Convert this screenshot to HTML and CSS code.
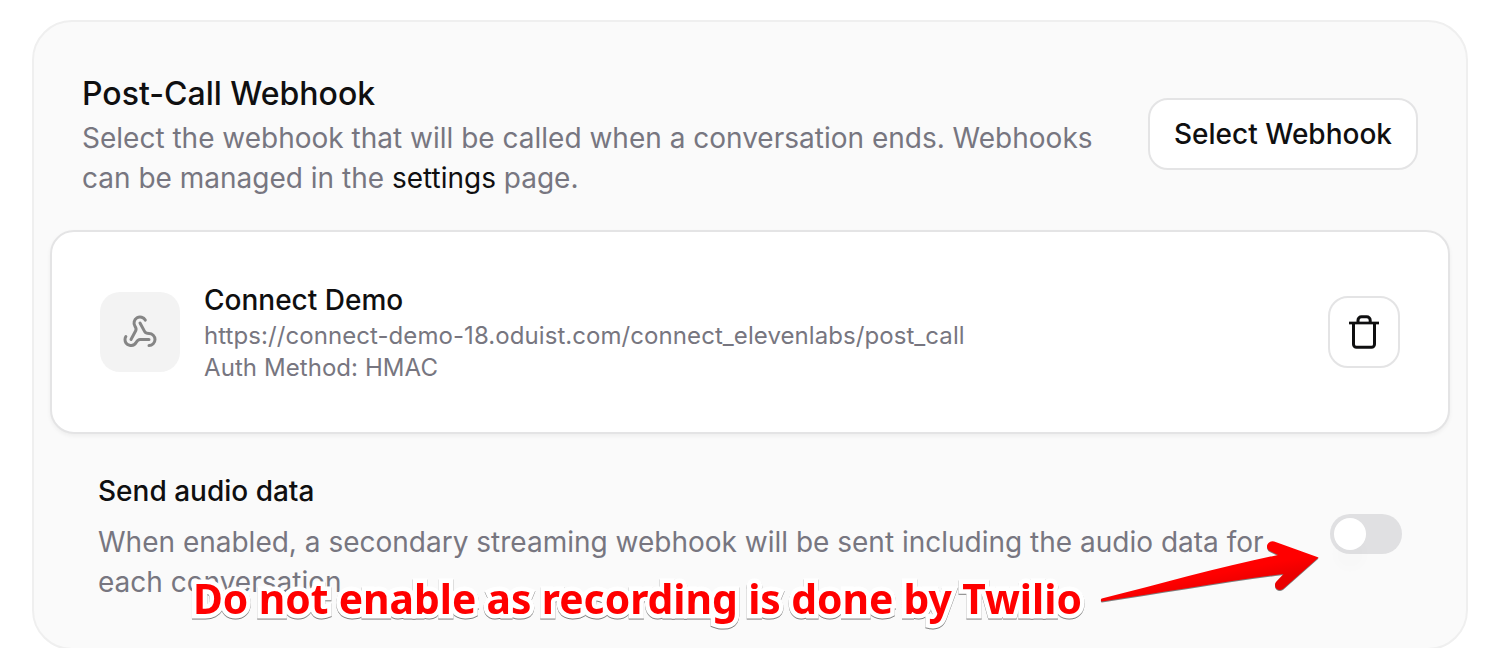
FILE: index.html
```html
<!DOCTYPE html>
<html lang="en">
<head>
  <meta charset="UTF-8" />
  <title>Post-Call Webhook</title>
  <link rel="stylesheet" href="styles.css">
</head>
<body>

  <section class="panel">
    <header class="panel-header">
      <div class="panel-intro">
        <h2>Post-Call Webhook</h2>
        <p class="description">Select the webhook that will be called when a conversation ends. Webhooks can be managed in the <a href="#">settings</a> page.</p>
      </div>
      <button class="select-btn">Select Webhook</button>
    </header>

    <div class="webhook">
      <div class="webhook-icon">
        <svg width="36" height="36" viewBox="0 0 24 24" fill="none" stroke="currentColor" stroke-width="2" stroke-linecap="round" stroke-linejoin="round">
          <path d="M18 16.98h-5.99c-1.1 0-1.95.94-2.48 1.9A4 4 0 0 1 2 17c.01-.7.2-1.4.57-2" />
          <path d="m6 17 3.13-5.78c.53-.97.1-2.18-.5-3.1a4 4 0 1 1 6.89-4.06" />
          <path d="m12 6 3.13 5.73C15.66 12.7 16.9 13 18 13a4 4 0 0 1 0 8" />
        </svg>
      </div>
      <div class="webhook-info">
        <h3>Connect Demo</h3>
        <p>https://connect-demo-18.oduist.com/connect_elevenlabs/post_call</p>
        <p>Auth Method: HMAC</p>
      </div>
      <button class="delete-btn" aria-label="Delete webhook">
        <svg width="40" height="40" viewBox="0 0 40 40" fill="none" stroke="currentColor" stroke-width="3">
          <path d="M5 11h30" stroke-width="2.7" />
          <path d="M9.5 11v21.3a3 3 0 0 0 3 3h15a3 3 0 0 0 3-3V11" />
          <path d="M14 11V8.2a3.5 3.5 0 0 1 3.5-3.5h5.2a3.5 3.5 0 0 1 3.5 3.5V11" />
        </svg>
      </button>
    </div>

    <div class="audio">
      <div class="audio-text">
        <h3>Send audio data</h3>
        <p class="description">When enabled, a secondary streaming webhook will be sent including the audio data for each conversation.</p>
      </div>
      <button class="switch" role="switch" aria-checked="false" aria-label="Send audio data"><span class="thumb"></span></button>
    </div>
  </section>

  <!-- callout on top of the panel -->
  <div class="note">Do not enable as recording is done by Twilio</div>
  <svg class="arrow" width="230" height="80" viewBox="0 0 230 80">
    <defs>
      <linearGradient id="arrowFill" gradientUnits="userSpaceOnUse" x1="150" y1="28" x2="155" y2="54">
        <stop offset="0.4" stop-color="#ff0000" />
        <stop offset="1" stop-color="#ea0000" />
      </linearGradient>
    </defs>
    <path fill="url(#arrowFill)" d="M11.8 68.6 C70 54 130 37 188 25 L180.3 21.3 A5.2 5.2 0 0 1 184.2 11.6 L228.6 27.5 L193.6 58.6 A5 5 0 0 1 186.4 51.6 L193.5 44 C130 52 70 63 12 71.6 A1.6 1.6 0 0 1 11.8 68.6 Z" />
  </svg>

</body>
</html>
```
FILE: styles.css
```css
* {
  box-sizing: border-box;
}
html, body {
  margin: 0;
  height: 648px;
  overflow: hidden;
}
body {
  position: relative;
  padding: 20px 26px 0 32px;
  background: #fff;
  color: #0f0f10;
  font-family: Inter, "Liberation Sans", sans-serif;
}
h2, h3, p {
  margin: 0;
  font-weight: 500;
}
button {
  padding: 0;
  font-family: inherit;
  color: inherit;
  background: #fff;
  border: 2px solid #e4e4e5;
  cursor: pointer;
}
.panel {
  height: 630px;
  padding: 52px 16px 0;
  background: #fafafa;
  border: 2px solid #efefef;
  border-radius: 40px;
}
.panel-header {
  display: flex;
  justify-content: space-between;
  align-items: center;
  height: 124px;
  padding: 0 32px;
}
.panel-intro {
  width: 1030px;
}
h2 {
  font-size: 32px;
  line-height: 40px;
}
h3 {
  font-size: 28px;
  line-height: 40px;
}
.description {
  margin-top: 4px;
  font-size: 28px;
  font-weight: 400;
  line-height: 40px;
  color: #777680;
}
.description a {
  color: #0f0f10;
  text-decoration: none;
}
.select-btn {
  width: 270px;
  height: 72px;
  margin-bottom: 4px;
  border-radius: 20px;
  font-size: 28px;
  font-weight: 500;
}
.webhook {
  display: flex;
  align-items: center;
  height: 204px;
  margin-top: 32px;
  padding: 0 48px;
  background: #fff;
  border: 2px solid #e4e4e5;
  border-radius: 24px;
  box-shadow: 0 2px 4px rgba(0, 0, 0, 0.05);
}
.webhook-icon {
  display: flex;
  align-items: center;
  justify-content: center;
  width: 80px;
  height: 80px;
  margin-right: 24px;
  border-radius: 20px;
  background: #f3f3f3;
  color: #858585;
}
.webhook-info {
  flex: 1;
}
.webhook-info p {
  font-size: 24px;
  font-weight: 400;
  line-height: 32px;
  letter-spacing: 0.07px;
  color: #777680;
}
.delete-btn {
  display: flex;
  align-items: center;
  justify-content: center;
  width: 72px;
  height: 72px;
  border-radius: 20px;
}
.audio {
  display: flex;
  justify-content: space-between;
  padding: 37px 48px 0;
}
.audio-text {
  width: 1180px;
}
.audio .description {
  margin-top: 11px;
}
.switch {
  width: 72px;
  height: 40px;
  margin-top: 43px;
  padding: 4px;
  border: none;
  border-radius: 20px;
  background: #e0e0e2;
}
.thumb {
  display: block;
  width: 32px;
  height: 32px;
  border-radius: 50%;
  background: #fff;
  box-shadow: 0 20px 12px rgba(0, 0, 0, 0.01);
}
.note {
  position: absolute;
  top: 570px;
  left: 193px;
  font-family: "Noto Sans", sans-serif;
  font-size: 40.8px;
  font-weight: 700;
  line-height: 56px;
  word-spacing: -0.3px;
  white-space: nowrap;
  color: #ff0000;
  -webkit-text-stroke: 9px #fff;
  stroke-linejoin: round;
  paint-order: stroke fill;
  filter: drop-shadow(0 1px 0.5px rgba(0, 0, 0, 0.5));
}
.arrow {
  position: absolute;
  top: 530px;
  left: 1090px;
  filter: drop-shadow(0 1px 0.5px rgba(0, 0, 0, 0.5));
}
```
